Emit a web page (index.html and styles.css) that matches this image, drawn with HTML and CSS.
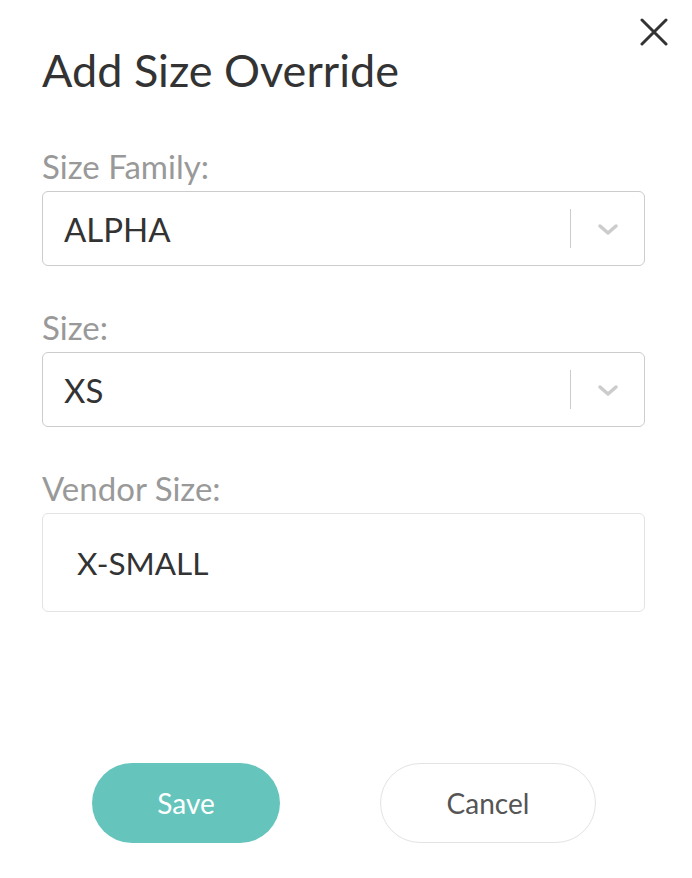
FILE: index.html
```html
<!DOCTYPE html>
<html>
<head>
<meta charset="utf-8">
<link rel="stylesheet" href="styles.css">
</head>
<body>
<div class="modal">
  <button class="close" aria-label="Close">
    <svg viewBox="0 0 28 28" width="28" height="28"><path d="M2 2 L26 26 M26 2 L2 26" stroke="#333" stroke-width="3" stroke-linecap="round" fill="none"/></svg>
  </button>
  <h1 class="title">Add Size Override</h1>
  <div class="field field-first">
    <div class="label">Size Family:</div>
    <div class="select">
      <span class="value">ALPHA</span>
      <span class="sep"></span>
      <span class="chev"><svg viewBox="0 0 22 13" width="22" height="13"><path d="M3 3 L11 10 L19 3" stroke="#cccccc" stroke-width="3.5" fill="none" stroke-linecap="round" stroke-linejoin="round"/></svg></span>
    </div>
  </div>
  <div class="field">
    <div class="label">Size:</div>
    <div class="select">
      <span class="value">XS</span>
      <span class="sep"></span>
      <span class="chev"><svg viewBox="0 0 22 13" width="22" height="13"><path d="M3 3 L11 10 L19 3" stroke="#cccccc" stroke-width="3.5" fill="none" stroke-linecap="round" stroke-linejoin="round"/></svg></span>
    </div>
  </div>
  <div class="field">
    <div class="label">Vendor Size:</div>
    <div class="input">X-SMALL</div>
  </div>
  <div class="actions">
    <button class="btn btn-save">Save</button>
    <button class="btn btn-cancel">Cancel</button>
  </div>
</div>
</body>
</html>
```
FILE: styles.css
```css
html, body {
  margin: 0;
  padding: 0;
  background: #ffffff;
}
body {
  font-family: Lato, "Open Sans", sans-serif;
  color: #333333;
}
.modal {
  position: relative;
  width: 692px;
  height: 878px;
  box-sizing: border-box;
  padding: 0 47px 0 42px;
}
.close {
  position: absolute;
  top: 18px;
  right: 24px;
  width: 28px;
  height: 28px;
  padding: 0;
  border: 0;
  background: none;
  display: flex;
}
.title {
  margin: 0;
  padding-top: 46px;
  font-size: 45px;
  font-weight: 400;
  line-height: 48px;
  color: #333333;
}
.field {
  margin-top: 41px;
}
.field-first {
  margin-top: 52px;
}
.label {
  font-size: 33px;
  line-height: 40px;
  color: #999999;
  margin-bottom: 5px;
}
.select {
  height: 75px;
  box-sizing: border-box;
  border: 1px solid #cccccc;
  border-radius: 6px;
  display: flex;
  align-items: center;
  padding-left: 21px;
}
.value {
  flex: 1;
  font-size: 33px;
  color: #333333;
}
.sep {
  width: 1px;
  height: 39px;
  background: #cccccc;
}
.chev {
  width: 73px;
  display: flex;
  justify-content: center;
  align-items: center;
  padding-top: 2px;
}
.input {
  height: 99px;
  box-sizing: border-box;
  border: 1px solid #e3e3e3;
  border-radius: 6px;
  display: flex;
  align-items: center;
  padding-left: 34px;
  font-size: 31.5px;
  color: #333333;
}
.actions {
  display: flex;
  margin-top: 151px;
  padding-left: 50px;
  gap: 100px;
}
.btn {
  height: 80px;
  border-radius: 40px;
  font-family: Lato, "Open Sans", sans-serif;
  font-size: 28px;
  padding: 0;
}
.btn-save {
  width: 188px;
  background: #65c5bc;
  color: #ffffff;
  border: 0;
}
.btn-cancel {
  width: 216px;
  background: #ffffff;
  color: #555555;
  border: 1px solid #e3e3e3;
}
```
